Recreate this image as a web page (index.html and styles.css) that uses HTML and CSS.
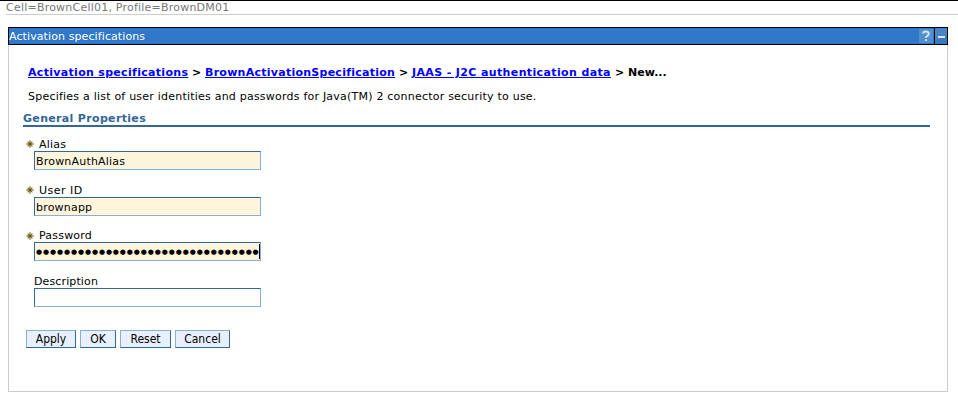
FILE: index.html
```
<!DOCTYPE html>
<html lang="en">
<head>
<meta charset="utf-8">
<title>Activation specifications</title>
<link rel="stylesheet" href="styles.css">
</head>
<body>
<svg class="defs" aria-hidden="true">
  <symbol id="required" viewBox="0 0 8 8">
    <path d="M1 1h6v6H1z" fill="#d8d3b5"/>
    <path d="M4 0v8M0 4h8" stroke="#aaa16a" stroke-width="1.4"/>
    <path d="M2 2l4 4M6 2l-4 4" stroke="#8c8145"/>
    <circle cx="4" cy="4" r="1.7" fill="#6b5c13"/>
  </symbol>
</svg>
<header class="scope">Cell=BrownCell01, Profile=BrownDM01</header>
<main class="portlet">
  <div class="titlebar">
    <h1 class="title">Activation specifications</h1>
    <svg class="help" viewBox="0 0 14 16"><path d="M0 1h14v14H0z" fill="#5290cd"/><path d="M4.3 5.5V5Q4.5 3.5 7 3.5T9.7 5.7Q9.7 7 8.3 7.8Q7 8.5 7 9.8M7 11.2v1.9" fill="none" stroke="#d5e6f5" stroke-width="2"/></svg>
    <svg class="minimize" viewBox="0 0 12 16"><path d="M0 0h12v16H0z" fill="#3979bd"/><path d="M0 0h12v7L0 13z" fill="#4686c6"/><path d="M3 9h7" stroke="#d5e6f5" stroke-width="2"/></svg>
  </div>
  <div class="body">
    <nav class="crumbs"><a class="spec" href="#">Activation specifications</a><span class="sep">&gt;</span><a class="name" href="#">BrownActivationSpecification</a><span class="sep">&gt;</span><a class="auth" href="#">JAAS - J2C authentication data</a><span class="sep">&gt;</span><span>New...</span></nav>
    <p class="intro">Specifies a list of user identities and passwords for Java(TM) 2 connector security to use.</p>
    <h2 class="section">General Properties</h2>
    <div class="fields">
      <div class="field"><div class="label"><svg class="req"><use href="#required"/></svg><span>Alias</span></div><div class="input required"><span>BrownAuthAlias</span></div></div>
      <div class="field"><div class="label user"><svg class="req"><use href="#required"/></svg><span>User ID</span></div><div class="input required"><span>brownapp</span></div></div>
      <div class="field password"><div class="label"><svg class="req"><use href="#required"/></svg><span>Password</span></div><div class="input required"><span class="dots">●●●●●●●●●●●●●●●●●●●●●●●●●●●●●●●●</span><span class="caret"></span></div></div>
      <div class="field"><div class="label optional"><span>Description</span></div><div class="input"></div></div>
    </div>
    <div class="actions"><button class="apply">Apply</button><button class="ok">OK</button><button class="reset">Reset</button><button class="cancel">Cancel</button></div>
  </div>
</main>
</body>
</html>
```
FILE: styles.css
```
* { box-sizing: border-box; }
body { margin: 0; height: 400px; border-top: 1px solid #000; background: #fff; color: #000; font: 11px/14px "DejaVu Sans", sans-serif; overflow: hidden; }
.defs { display: none; }
.scope { height: 14px; margin-left: 6px; border-bottom: 1px solid #ccc; color: #777; line-height: 13px; letter-spacing: 0.22px; }
.portlet { width: 940px; height: 365px; margin: 12px 0 0 8px; border: 1px solid #ccc; border-top: 0; }
.titlebar { display: flex; height: 18px; margin: 0 -1px; border: 1px solid #000; background: #3178c9; color: #fff; }
.title { flex: 1; margin: 0; font-size: 11px; font-weight: 400; line-height: 18px; letter-spacing: 0.1px; }
.help { width: 14px; height: 16px; margin-right: 1px; }
.minimize { width: 13px; height: 16px; border-left: 1px solid #000; }
.body { padding: 21px 17px 0 14px; }
.crumbs { display: flex; margin-left: 5px; font-weight: 700; white-space: nowrap; }
.crumbs a { color: #00f; }
.crumbs .spec { width: 160px; letter-spacing: 0.31px; }
.crumbs .name { width: 190px; letter-spacing: 0.26px; }
.crumbs .auth { width: 199px; letter-spacing: 0.37px; }
.sep { width: 17px; text-align: center; }
.intro { margin: 10px 0 7px 5px; letter-spacing: 0.22px; white-space: nowrap; }
.section { height: 16px; margin: 0; border-bottom: 2px solid #369; color: #369; font-size: 11px; line-height: 15px; letter-spacing: 0.33px; }
.fields { display: flex; flex-direction: column; margin-top: 10px; letter-spacing: 0.2px; }
.field { height: 46px; }
.field.password { margin-top: -1px; }
.label { display: flex; align-items: center; height: 14px; margin-left: 3px; }
.label span, .input > span:not(.dots, .caret) { padding-top: 2px; }
.label.user { letter-spacing: 0.5px; }
.label.optional { margin-left: 11px; letter-spacing: 0.12px; }
.field.password .req { margin-top: 2px; }
.req { width: 8px; height: 8px; margin-right: 5px; }
.input { display: flex; align-items: center; width: 227px; height: 19px; margin-left: 11px; padding-left: 1px; border: 1px solid; border-color: #369 #8ab0d0 #8ab0d0 #369; }
.input.required { background: #fff6dd; }
.dots { width: 223px; padding-top: 1px; font-size: 7px; letter-spacing: 0.88px; white-space: nowrap; }
.caret { width: 1px; height: 15px; background: #000; }
.actions { display: flex; gap: 4px; margin: 10px 0 0 3px; }
button { height: 18px; padding: 0; border: 1px solid; border-color: #8ab0d0 #369 #369 #8ab0d0; background: #e8f0ff; color: #000; font: 12px/16px "DejaVu Sans Condensed", sans-serif; }
.apply { width: 50px; }
.ok { width: 36px; }
.reset { width: 51px; }
.cancel { width: 55px; }
```
